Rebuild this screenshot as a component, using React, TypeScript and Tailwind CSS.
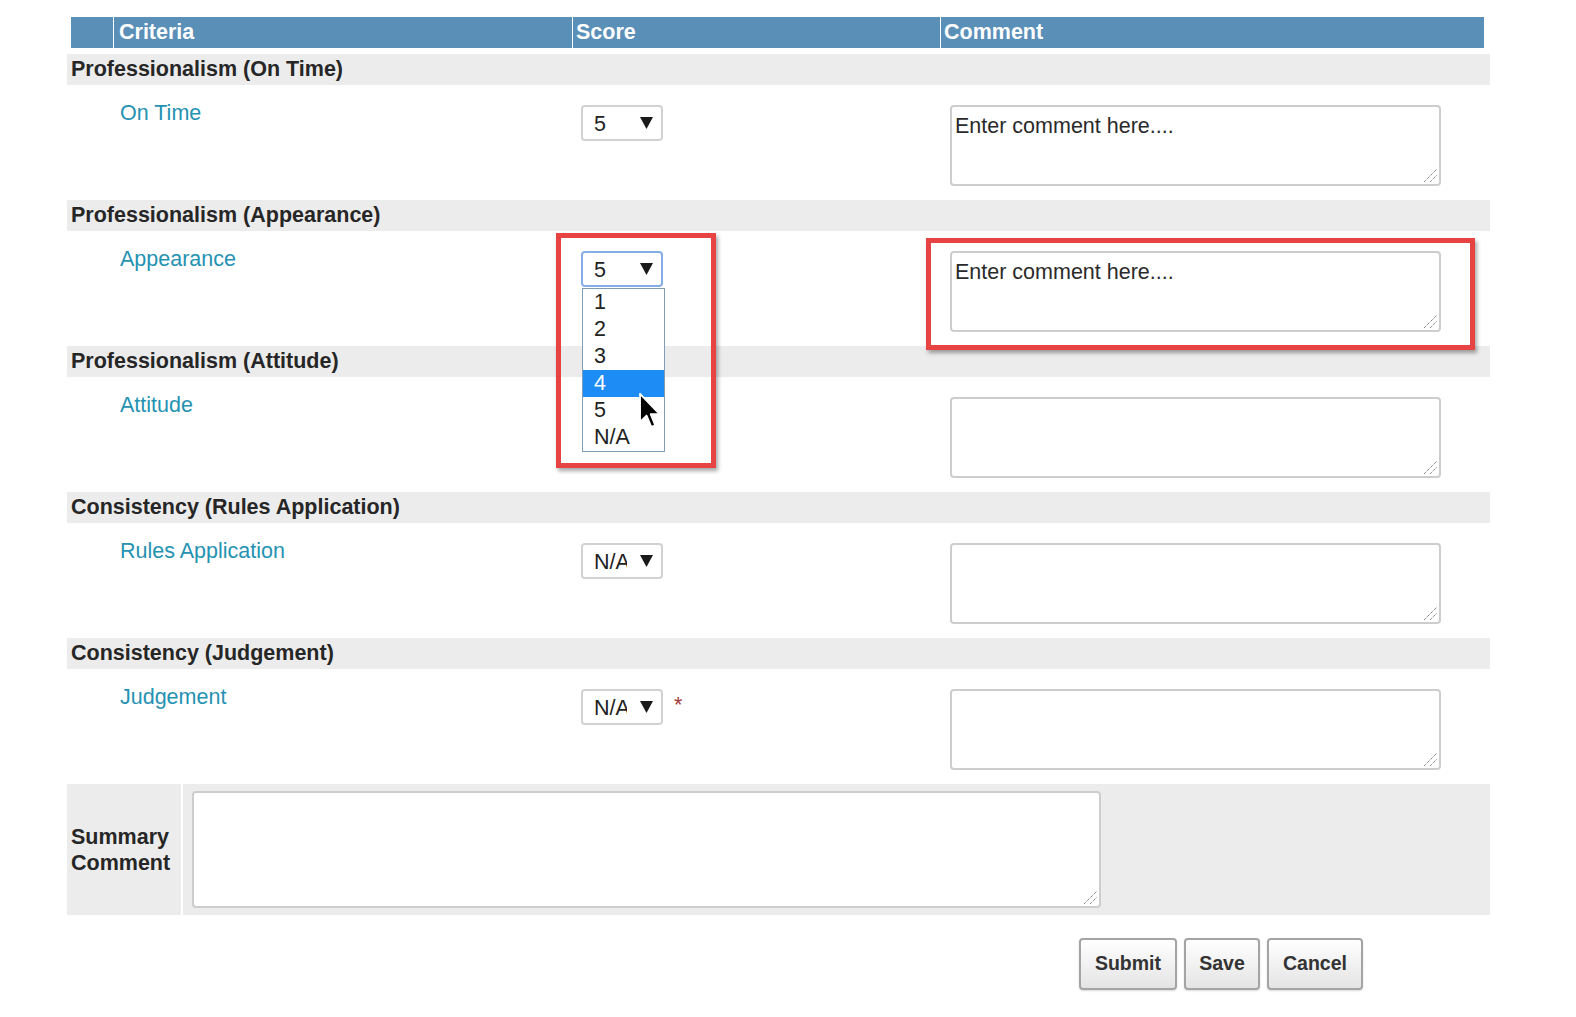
import React from 'react'

const font = { fontFamily: '"Liberation Sans", Arial, sans-serif' }

function Arrow() {
  return (
    <svg width="13" height="12" viewBox="0 0 13 12" className="shrink-0">
      <path d="M0 0 H13 L6.5 12 Z" fill="#1a1a1a" />
    </svg>
  )
}

// windows-style resize grip
function Grip() {
  return (
    <svg width="17" height="17" viewBox="0 0 17 17" className="pointer-events-none absolute bottom-[3px] right-[3px]">
      <path d="M3 16 L16 3 M9 16 L16 9" stroke="#555" strokeWidth="1" strokeDasharray="1 1" />
    </svg>
  )
}

function ScoreSelect({ value, focused, children }: { value: string; focused?: boolean; children?: React.ReactNode }) {
  return (
    <div
      className={`relative flex h-[36px] w-[82px] items-center rounded-[4px] border-2 bg-white pl-[11px] ${
        focused ? 'border-[#86aee6]' : 'border-[#d2d2d2]'
      }`}
    >
      <span className="h-[26px] w-[33px] overflow-hidden whitespace-nowrap pt-[1px] text-[21.5px] leading-[26px] text-[#222]">
        {value}
      </span>
      <span className="ml-[13px]">
        <Arrow />
      </span>
      {children}
    </div>
  )
}

function Comment({ placeholder }: { placeholder?: string }) {
  return (
    <div className="relative">
      <textarea
        placeholder={placeholder}
        className="block h-[81px] w-[491px] resize-none rounded-[4px] border-2 border-[#cdcdcd] bg-white px-[3px] pt-[7px] text-[21.5px] leading-[24px] text-[#222] placeholder:text-[#2a2a2a] outline-none"
        style={font}
      />
      <Grip />
    </div>
  )
}

function Section({ title }: { title: string }) {
  return (
    <div className="h-[31px] bg-[#ececec] pl-[4px] text-[21.5px] font-bold leading-[31px] text-[#262626]">{title}</div>
  )
}

function Item({
  label,
  score,
  placeholder,
  required,
  scoreExtra,
  commentExtra,
}: {
  label: string
  score?: React.ReactNode
  placeholder?: string
  required?: boolean
  scoreExtra?: React.ReactNode
  commentExtra?: React.ReactNode
}) {
  return (
    <div className="flex h-[115px] bg-white">
      <div className="w-[514px] pl-[53px] pt-[16px] text-[21.5px] leading-[24px] text-[#2592b2]">{label}</div>
      <div className="w-[369px] pt-[20px]">
        <div className="relative flex items-start">
          {score}
          {required && <span className="ml-[11px] mt-[4px] text-[21.5px] leading-[24px] text-[#a33a3a]">*</span>}
          {scoreExtra}
        </div>
      </div>
      <div className="pt-[20px]">
        <div className="relative">
          <Comment placeholder={placeholder} />
          {commentExtra}
        </div>
      </div>
    </div>
  )
}

function Cursor() {
  return (
    <svg width="24" height="38" viewBox="0 0 13 21" className="absolute left-[55px] top-[103px]">
      <path
        d="M1 1 L1 16.5 L4.6 13 L7.2 19.3 L9.4 18.4 L6.9 12.2 L11.8 12.2 Z"
        fill="#000"
        stroke="#fff"
        strokeWidth="1"
        strokeLinejoin="round"
      />
    </svg>
  )
}

function OpenList() {
  const opts = ['1', '2', '3', '4', '5', 'N/A']
  return (
    <div className="absolute left-[-1px] top-[35px] z-10 w-[83px] border border-[#7f9db9] bg-white">
      {opts.map((o) => (
        <div
          key={o}
          className={`h-[27px] pl-[11px] text-[21.5px] leading-[27px] ${
            o === '4' ? 'bg-[#1e8cf5] text-white' : 'text-[#222]'
          }`}
        >
          {o}
        </div>
      ))}
      <Cursor />
    </div>
  )
}

function Btn({ children, w }: { children: React.ReactNode; w: string }) {
  return (
    <button
      className={`${w} h-[52px] rounded-[4px] border-2 border-[#a4a4a4] bg-gradient-to-b from-white to-[#e4e4e4] text-[19.5px] font-bold text-[#333] shadow-[0_1px_2px_rgba(0,0,0,0.15)]`}
      style={font}
    >
      {children}
    </button>
  )
}

export default function App() {
  return (
    <div className="min-h-screen bg-white pt-[17px]" style={font}>
      <div className="ml-[67px] w-[1423px]">
        {/* header */}
        <div className="ml-[4px] mr-[6px] grid h-[31px] grid-cols-[42px_459px_368px_1fr] bg-[#5a8fb8] text-[21.5px] font-bold leading-[31px] text-white">
          <div />
          <div className="border-l border-white pl-[5px]">Criteria</div>
          <div className="border-l border-white pl-[3px]">Score</div>
          <div className="border-l border-white pl-[3px]">Comment</div>
        </div>

        <div className="mt-[6px]">
          <Section title="Professionalism (On Time)" />
          <Item label="On Time" score={<ScoreSelect value="5" />} placeholder="Enter comment here...." />

          <Section title="Professionalism (Appearance)" />
          <Item
            label="Appearance"
            score={
              <ScoreSelect value="5" focused>
                <OpenList />
              </ScoreSelect>
            }
            scoreExtra={
              <div className="pointer-events-none absolute left-[-25px] top-[-18px] z-20 h-[235px] w-[160px] border-[5px] border-[#e84343] shadow-[2px_3px_4px_rgba(0,0,0,0.35)]" />
            }
            placeholder="Enter comment here...."
            commentExtra={
              <div className="pointer-events-none absolute left-[-24px] top-[-13px] z-20 h-[112px] w-[549px] border-[5px] border-[#e84343] shadow-[2px_3px_4px_rgba(0,0,0,0.35)]" />
            }
          />

          <Section title="Professionalism (Attitude)" />
          <Item label="Attitude" />

          <Section title="Consistency (Rules Application)" />
          <Item label="Rules Application" score={<ScoreSelect value="N/A" />} />

          <Section title="Consistency (Judgement)" />
          <Item label="Judgement" score={<ScoreSelect value="N/A" />} required />

          {/* summary */}
          <div className="flex h-[131px] bg-[#ececec]">
            <div className="flex w-[114px] items-center pl-[4px] text-[21.5px] font-bold leading-[26px] text-[#262626]">
              Summary
              <br />
              Comment
            </div>
            <div className="flex-1 border-l-2 border-white pl-[9px] pt-[7px]">
              <div className="relative w-[909px]">
                <textarea className="block h-[117px] w-[909px] resize-none rounded-[4px] border-2 border-[#cdcdcd] bg-white outline-none" />
                <Grip />
              </div>
            </div>
          </div>
        </div>

        <div className="mt-[23px] flex justify-end gap-[7px] pr-[127px]">
          <Btn w="w-[98px]">Submit</Btn>
          <Btn w="w-[76px]">Save</Btn>
          <Btn w="w-[96px]">Cancel</Btn>
        </div>
      </div>
    </div>
  )
}
